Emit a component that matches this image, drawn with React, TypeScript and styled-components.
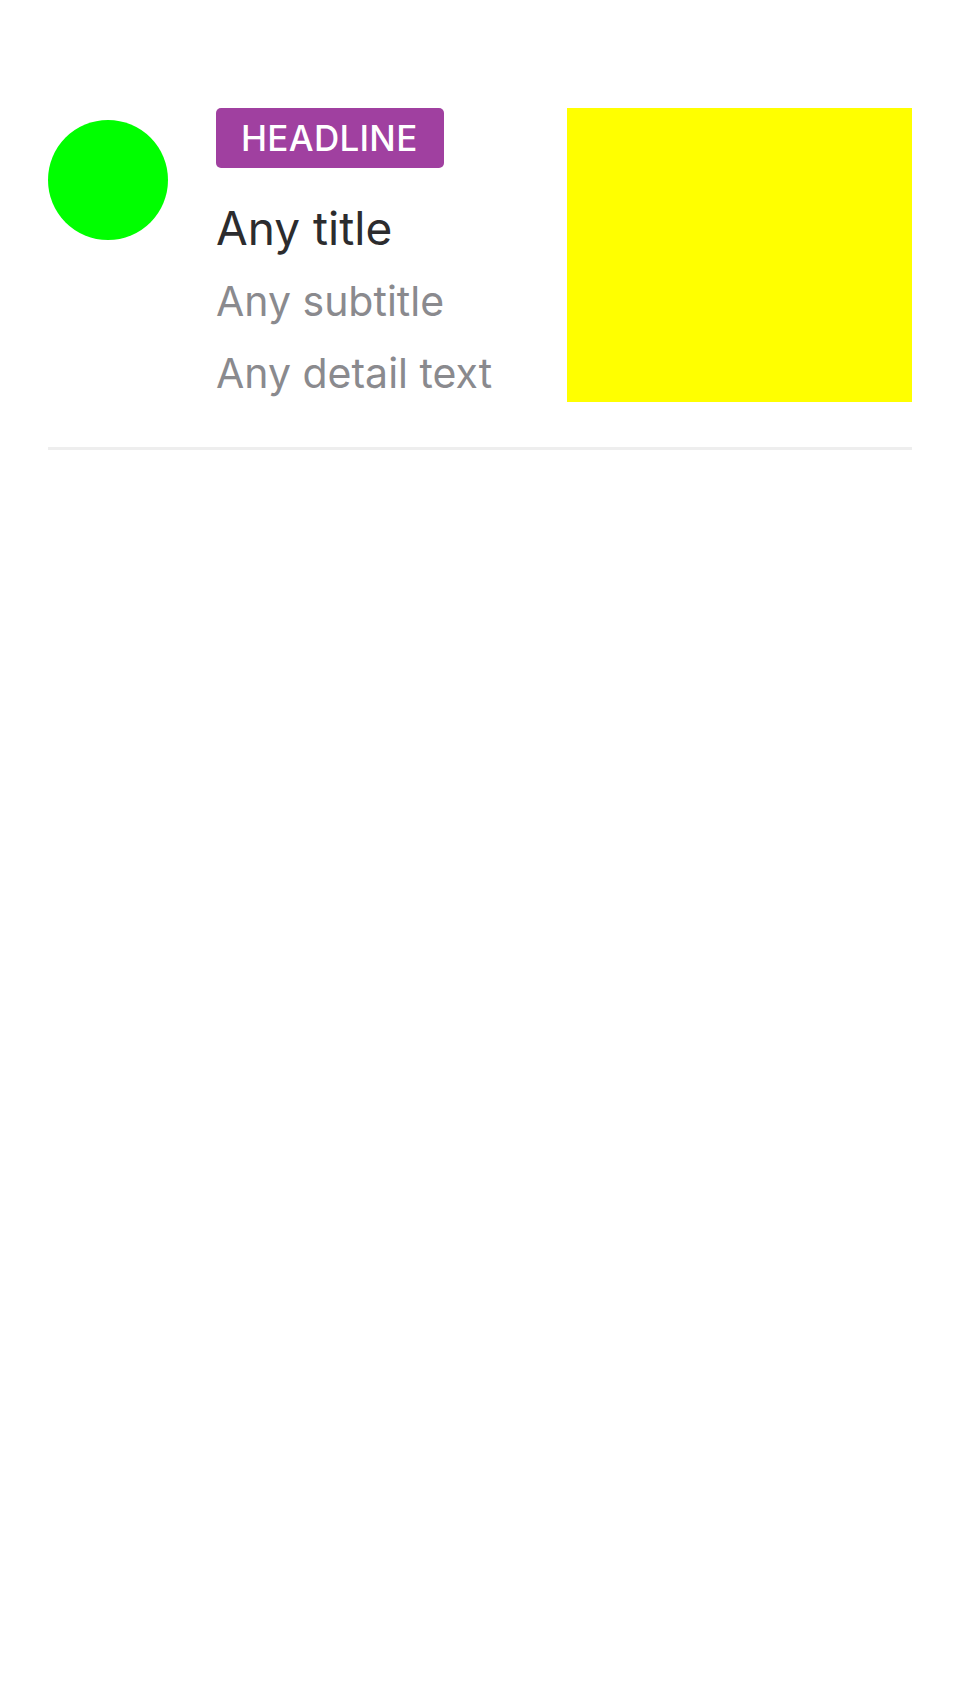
import React from "react";
import styled, { createGlobalStyle } from "styled-components";

const Global = createGlobalStyle`
  html, body { margin: 0; padding: 0; background: #ffffff; }
  body { font-family: Inter, "Noto Sans", sans-serif; -webkit-font-smoothing: antialiased; }
`;

const Page = styled.div`
  padding: 108px 48px 0;
`;

const Row = styled.div`
  display: flex;
  align-items: flex-start;
  padding-bottom: 45px;
  border-bottom: 3px solid #eeeeee;
`;

const Avatar = styled.div`
  width: 120px;
  height: 120px;
  margin-top: 12px;
  border-radius: 50%;
  background: #00ff00;
  flex-shrink: 0;
`;

const Content = styled.div`
  flex: 1;
  display: flex;
  flex-direction: column;
  align-items: flex-start;
  margin-left: 48px;
`;

const Badge = styled.span`
  display: inline-flex;
  align-items: center;
  height: 60px;
  padding: 0 26px 0 25px;
  border-radius: 5px;
  background: #a040a0;
  color: #ffffff;
  font-size: 35px;
  font-weight: 500;
  letter-spacing: 0.3px;
`;

const Title = styled.div`
  margin-top: 32px;
  font-size: 46px;
  line-height: 56px;
  color: #2c2c2e;
`;

const Line = styled.div<{ $gap: number }>`
  margin-top: ${(p) => p.$gap}px;
  font-size: 41px;
  line-height: 50px;
  color: #8a8a8e;
`;

const Media = styled.div`
  width: 345px;
  height: 294px;
  background: #ffff00;
  flex-shrink: 0;
`;

export default function App() {
  return (
    <>
      <Global />
      <Page>
        <Row>
          <Avatar />
          <Content>
            <Badge>HEADLINE</Badge>
            <Title>Any title</Title>
            <Line $gap={20}>Any subtitle</Line>
            <Line $gap={22}>Any detail text</Line>
          </Content>
          <Media />
        </Row>
      </Page>
    </>
  );
}
